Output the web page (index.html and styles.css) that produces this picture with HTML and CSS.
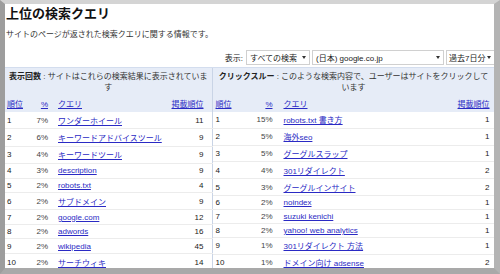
FILE: index.html
```html
<!DOCTYPE html>
<html lang="ja">
<head>
    <meta charset="UTF-8">
    <title>上位の検索クエリ</title>
    <link rel="stylesheet" href="styles.css">
</head>
<body>
    <div class="frame">
        <div class="page">
            <h1 class="title">上位の検索クエリ</h1>
            <p class="subtitle">サイトのページが返された検索クエリに関する情報です。</p>

            <div class="filters">
                <span class="filter-label">表示:</span>
                <span class="dropdown dd-type">すべての検索<i class="arrow"></i></span>
                <span class="dropdown dd-domain">(日本) google.co.jp<i class="arrow"></i></span>
                <span class="dropdown dd-range">過去7日分<i class="arrow"></i></span>
            </div>

            <div class="panels">
                <table class="queries left">
                    <colgroup>
                        <col class="c-rank"><col class="c-pct"><col class="c-query"><col class="c-pos">
                    </colgroup>
                    <thead>
                        <tr>
                            <th colspan="4" class="caption"><b>表示回数</b> : サイトはこれらの検索結果に表示されています</th>
                        </tr>
                        <tr class="cols">
                            <th class="rank"><a href="#">順位</a></th>
                            <th class="pct"><a href="#">%</a></th>
                            <th class="query"><a href="#">クエリ</a></th>
                            <th class="pos"><a href="#">掲載順位</a></th>
                        </tr>
                    </thead>
                    <tbody>
                        <tr><td class="rank">1</td><td class="pct">7%</td><td class="query ja"><a href="#">ワンダーホイール</a></td><td class="pos">11</td></tr>
                        <tr><td class="rank">2</td><td class="pct">6%</td><td class="query ja"><a href="#">キーワードアドバイスツール</a></td><td class="pos">9</td></tr>
                        <tr><td class="rank">3</td><td class="pct">4%</td><td class="query ja"><a href="#">キーワードツール</a></td><td class="pos">9</td></tr>
                        <tr><td class="rank">4</td><td class="pct">3%</td><td class="query"><a href="#">description</a></td><td class="pos">9</td></tr>
                        <tr><td class="rank">5</td><td class="pct">2%</td><td class="query"><a href="#">robots.txt</a></td><td class="pos">4</td></tr>
                        <tr><td class="rank">6</td><td class="pct">2%</td><td class="query ja"><a href="#">サブドメイン</a></td><td class="pos">9</td></tr>
                        <tr><td class="rank">7</td><td class="pct">2%</td><td class="query"><a href="#">google.com</a></td><td class="pos">12</td></tr>
                        <tr><td class="rank">8</td><td class="pct">2%</td><td class="query"><a href="#">adwords</a></td><td class="pos">16</td></tr>
                        <tr><td class="rank">9</td><td class="pct">2%</td><td class="query"><a href="#">wikipedia</a></td><td class="pos">45</td></tr>
                        <tr><td class="rank">10</td><td class="pct">2%</td><td class="query ja"><a href="#">サーチウィキ</a></td><td class="pos">14</td></tr>
                    </tbody>
                </table>

                <table class="queries right">
                    <colgroup>
                        <col class="c-rank"><col class="c-pct"><col class="c-query"><col class="c-pos">
                    </colgroup>
                    <thead>
                        <tr>
                            <th colspan="4" class="caption"><b>クリックスルー</b> : このような検索内容で、ユーザーはサイトをクリックしています</th>
                        </tr>
                        <tr class="cols">
                            <th class="rank"><a href="#">順位</a></th>
                            <th class="pct"><a href="#">%</a></th>
                            <th class="query"><a href="#">クエリ</a></th>
                            <th class="pos"><a href="#">掲載順位</a></th>
                        </tr>
                    </thead>
                    <tbody>
                        <tr><td class="rank">1</td><td class="pct">15%</td><td class="query ja"><a href="#">robots.txt 書き方</a></td><td class="pos">1</td></tr>
                        <tr><td class="rank">2</td><td class="pct">5%</td><td class="query ja"><a href="#">海外seo</a></td><td class="pos">1</td></tr>
                        <tr><td class="rank">3</td><td class="pct">5%</td><td class="query ja"><a href="#">グーグルスラップ</a></td><td class="pos">1</td></tr>
                        <tr><td class="rank">4</td><td class="pct">4%</td><td class="query ja"><a href="#">301リダイレクト</a></td><td class="pos">2</td></tr>
                        <tr><td class="rank">5</td><td class="pct">3%</td><td class="query ja"><a href="#">グーグルインサイト</a></td><td class="pos">2</td></tr>
                        <tr><td class="rank">6</td><td class="pct">2%</td><td class="query"><a href="#">noindex</a></td><td class="pos">1</td></tr>
                        <tr><td class="rank">7</td><td class="pct">2%</td><td class="query"><a href="#">suzuki kenichi</a></td><td class="pos">1</td></tr>
                        <tr><td class="rank">8</td><td class="pct">2%</td><td class="query"><a href="#">yahoo! web analytics</a></td><td class="pos">1</td></tr>
                        <tr><td class="rank">9</td><td class="pct">1%</td><td class="query ja"><a href="#">301リダイレクト 方法</a></td><td class="pos">1</td></tr>
                        <tr><td class="rank">10</td><td class="pct">1%</td><td class="query ja"><a href="#">ドメイン向け adsense</a></td><td class="pos">2</td></tr>
                    </tbody>
                </table>
            </div>
        </div>
    </div>
</body>
</html>
```

FILE: styles.css
```css
* {
    margin: 0;
    padding: 0;
    box-sizing: border-box;
}

body {
    font-family: "Liberation Sans", Arial, "Noto Sans CJK JP", sans-serif;
    background: #fff;
    color: #222;
}

/* screenshot frame with drop shadow edges */
.frame {
    width: 500px;
    height: 274px;
    overflow: hidden;
    border-top: 4px solid #d4d4d4;
    border-left: 5px solid #9d9d9d;
    border-right: 6px solid #b4b4b4;
    border-bottom: 6px solid #a9a9a9;
    box-shadow: inset 1px 1px 0 #888, inset -1px -1px 0 #e0e0e0;
}

.page {
    height: 100%;
    overflow: hidden;
    background: #fff;
}

.title {
    font-size: 13px;
    font-weight: bold;
    line-height: 18px;
    padding: 1px 0 0 1px;
    color: #111;
}

.subtitle {
    font-size: 8px;
    line-height: 11px;
    margin-top: 6px;
    padding-left: 1px;
    color: #333;
}

.filters {
    display: flex;
    justify-content: flex-end;
    align-items: center;
    gap: 2px;
    margin-top: 10px;
    margin-right: -3px;
    height: 15px;
    font-size: 8px;
}

.filter-label {
    margin-right: 1px;
}

.dropdown {
    position: relative;
    display: flex;
    align-items: center;
    height: 15px;
    border: 1px solid #d0d0d0;
    padding-left: 3px;
    background: #fff;
    white-space: nowrap;
}

.dd-type { width: 64px; }
.dd-domain { width: 132px; }
.dd-range { width: 51px; padding-left: 2px; }

.arrow {
    position: absolute;
    right: 3px;
    top: 5px;
    border-left: 2.5px solid transparent;
    border-right: 2.5px solid transparent;
    border-top: 3px solid #333;
}

.dd-range .arrow {
    right: 5px;
}

.panels {
    display: flex;
    margin-top: 2px;
}

.queries {
    border-collapse: collapse;
    table-layout: fixed;
    font-size: 8px;
}

.queries.left {
    width: 207px;
    border-right: 1px solid #c9d4e6;
}

.queries.right {
    width: 282px;
}

.left .c-rank { width: 25px; }
.left .c-pct { width: 20px; }
.left .c-query { width: 120px; }
.left .c-pos { width: 42px; }

.right .c-rank { width: 37px; }
.right .c-pct { width: 26px; }
.right .c-query { width: 164px; }
.right .c-pos { width: 55px; }

thead {
    background: #e6ecf7;
    border-top: 1px solid #d3ddee;
}

th {
    font-weight: normal;
}

.caption {
    text-align: center;
    line-height: 11px;
    padding: 3px 4px 5px;
    color: #333;
}

.caption b {
    color: #222;
}

.cols th {
    line-height: 11px;
    padding: 1px 0 2px;
}

a {
    color: #2a2ac4;
    text-decoration: underline;
}

tbody tr {
    border-bottom: 1px solid #ececec;
}

tbody td {
    padding: 2px 0;
    vertical-align: middle;
    white-space: nowrap;
}

.rank {
    text-align: left;
}

.pct {
    text-align: right;
    color: #444;
}

.query {
    text-align: left;
    padding-left: 8px !important;
}

/* japanese queries render a little taller */
.query.ja {
    padding-top: 2.4px;
    padding-bottom: 2.4px;
}

.pos {
    text-align: right;
}

.left .rank { padding-left: 2px; }
.left .pct { padding-right: 2px; }
.left .pos { padding-right: 8px; }

.right .rank { padding-left: 3px; }
.right .pct { padding-right: 3px; }
.right .pos { padding-right: 5px; }
```
